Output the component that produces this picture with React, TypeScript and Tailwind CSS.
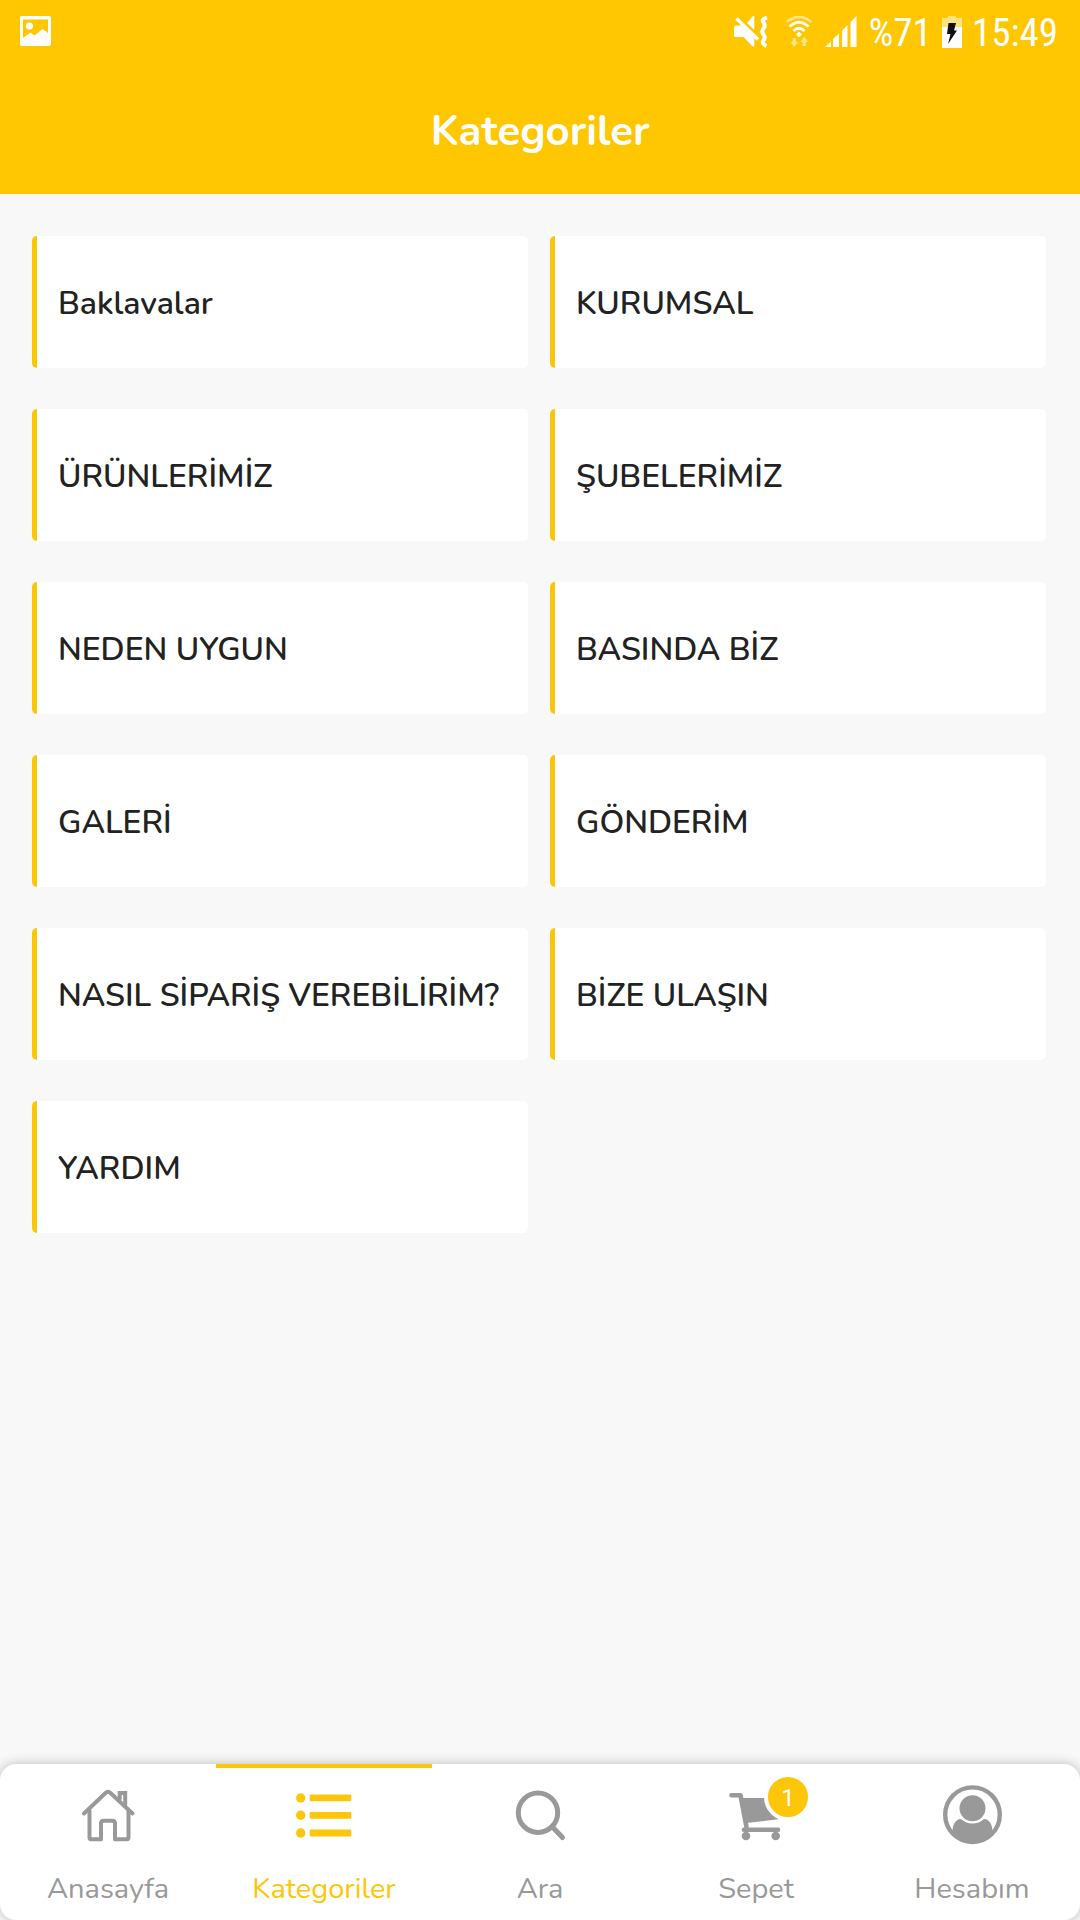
import React from 'react';

type Tab = {
  label: string;
  icon: any;
  active?: boolean;
  badge?: number;
};

const categories = [
  'Baklavalar',
  'KURUMSAL',
  'ÜRÜNLERİMİZ',
  'ŞUBELERİMİZ',
  'NEDEN UYGUN',
  'BASINDA BİZ',
  'GALERİ',
  'GÖNDERİM',
  'NASIL SİPARİŞ VEREBİLİRİM?',
  'BİZE ULAŞIN',
  'YARDIM',
];

// tab icons share one 60x60 canvas
const tabIcon = (body: any) => (
  <svg
    className="size-[60px]"
    viewBox="0 0 60 60"
    fill="none"
    stroke="currentColor"
    strokeLinecap="round"
    strokeLinejoin="round"
    aria-hidden="true"
  >
    {body}
  </svg>
);

const tabs: Tab[] = [
  {
    label: 'Anasayfa',
    icon: tabIcon(
      <g strokeWidth="4">
        <path d="M6 28.5 27.5 8Q30 5.5 32.5 8L54.5 28.5" />
        <path d="M11.5 26V52.5Q11.5 54.2 13.2 54.2H23V38.5Q23 35.8 25.7 35.8H34.3Q37 35.8 37 38.5V54.2H48.8Q50.5 54.2 50.5 52.5V26" />
        <path d="M41.7 14V8H47.2V20" strokeLinejoin="miter" />
      </g>,
    ),
  },
  {
    label: 'Kategoriler',
    active: true,
    icon: tabIcon(
      <g fill="currentColor" stroke="none">
        <circle cx="6.7" cy="13" r="4.7" />
        <circle cx="6.7" cy="30.3" r="4.7" />
        <circle cx="6.7" cy="48" r="4.7" />
        <rect x="15.7" y="9.4" width="41.6" height="6.8" rx="1" />
        <rect x="15.7" y="26.9" width="41.6" height="6.8" rx="1" />
        <rect x="15.7" y="44.6" width="41.6" height="6.8" rx="1" />
      </g>,
    ),
  },
  {
    label: 'Ara',
    icon: tabIcon(
      <g strokeWidth="5">
        <circle cx="28" cy="27.7" r="19.7" />
        <path d="M42.5 42 52.5 52.5" />
      </g>,
    ),
  },
  {
    label: 'Sepet',
    badge: 1,
    icon: tabIcon(
      <>
        <path d="M5.5 10.3H14.5L20.5 42" strokeWidth="4.6" />
        <path d="M15.5 13H62L58 33.5 20.5 38Z" fill="currentColor" stroke="none" />
        <path d="M18 44.7H52" strokeWidth="4.6" />
        <circle cx="20" cy="51" r="4.3" fill="currentColor" stroke="none" />
        <circle cx="49.7" cy="51" r="4.3" fill="currentColor" stroke="none" />
      </>,
    ),
  },
  {
    label: 'Hesabım',
    icon: tabIcon(
      <>
        <circle cx="30.5" cy="29.7" r="27.3" strokeWidth="4.4" />
        <circle cx="30.5" cy="23.3" r="13" fill="currentColor" stroke="none" />
        <path
          d="M8.5 45.5H10.5C11 39 13.5 34.500 19 34Q24 38.5 30.5 38.5T42 34C47.5 34.5 50 39 50.5 45.5H52.5A27 27 0 0 1 8.5 45.5Z"
          fill="currentColor"
          stroke="none"
        />
      </>,
    ),
  },
];

const StatusBar = () => (
  <div className="flex h-16 items-center pr-[22px] pl-5 text-white">
    <svg className="h-8 w-8" viewBox="0 0 32 32" fill="currentColor" aria-hidden="true">
      <path
        fillRule="evenodd"
        d="M2 0H29Q31 0 31 2V28Q31 30 29 30H2Q0 30 0 28V2Q0 0 2 0ZM3 3.5V22L10.5 16.5 14.5 19.5 22.5 13 28 17V3.5Z"
      />
      <circle cx="9.5" cy="10" r="3.6" />
    </svg>

    <div className="ml-auto flex items-center gap-3">
      <svg className="mr-1 h-8 w-9" viewBox="0 0 36 32" fill="currentColor" aria-hidden="true">
        <path d="M1 11Q1 9.5 2.5 9.5H8L21.3 21V30.5H19.5L10.5 21H2.5Q1 21 1 19.5Z" />
        <path d="M14 7 20 0H21.3V14Z" />
        <path d="M3.5 2.5 25 23.5" stroke="currentColor" strokeWidth="3.4" />
        <path
          d="M34 1.5Q28 3.5 30.5 6.5T30.5 12.5 30.5 18.5 30.5 24.5 33.5 30"
          fill="none"
          stroke="currentColor"
          strokeWidth="4"
        />
      </svg>
      <svg
        className="h-8 w-7"
        viewBox="0 0 28 32"
        fill="none"
        stroke="currentColor"
        strokeWidth="2.8"
        aria-hidden="true"
      >
        <path d="M1.5 6Q14-4 26.5 6" opacity="0.5" />
        <path d="M4.5 10.5Q14 2 23.5 10.5M8.5 15Q14 9.5 19.5 15" />
        <path d="M14 15.5 17 18.5 14 21.5 11 18.5Z" fill="currentColor" stroke="none" />
        <path
          d="M7.5 22H11V26H13L9.3 31 5.500 26H7.5ZM17.5 30H21V26H23L19.3 20.5 15.5 26H17.5Z"
          fill="currentColor"
          stroke="none"
          opacity="0.5"
        />
      </svg>
      <svg className="h-8 w-8" viewBox="0 0 32 32" fill="currentColor" aria-hidden="true">
        <path d="M0 31 6 25.5V31ZM8 31V23L14 17.5V31ZM17 31V14.5L22.5 9V31ZM25.5 31V6L31.5 0V31Z" />
      </svg>
      <div className="flex items-center gap-[10px] font-['Roboto_Condensed','Roboto',sans-serif] text-[39px] leading-10">
        <span className="pt-[2px]">%71</span>
        <svg className="h-8 w-5" viewBox="0 0 20 32" aria-hidden="true">
          <path d="M6 0H14V2H20V11H0V2H6Z" fill="#fff" opacity="0.5" />
          <path d="M0 11H20V32H0Z" fill="#fff" />
          <path d="M6.5 7H14L12 14.5H15L6 28 8.5 18H5Z" fill="#111" />
        </svg>
        <span className="pt-[2px]">15:49</span>
      </div>
    </div>
  </div>
);

const TabItem = ({ label, icon, active, badge }: Tab) => (
  <a
    href="#"
    aria-current={active ? 'page' : undefined}
    className={
      active
        ? 'flex flex-1 flex-col items-center border-t-4 border-[#fdc608] pt-[17px] text-[#fdc608]'
        : 'flex flex-1 flex-col items-center border-t-4 border-transparent pt-[17px] text-[#999999]'
    }
  >
    <span className="relative">
      {icon}
      {badge && (
        <span className="absolute -top-3 -right-[26px] flex size-12 items-center justify-center rounded-full border-4 border-white bg-[#fdc608] pt-[2px] font-[Roboto] text-2xl text-white">
          {badge}
        </span>
      )}
    </span>
    <span className="mt-6 text-[29px] leading-10">{label}</span>
  </a>
);

const App = () => {
  return (
    <div className="flex min-h-screen flex-col bg-[#f8f8f8] font-['Nunito','Noto_Sans',sans-serif]">
      <header className="bg-[#ffc602] text-white">
        <StatusBar />
        <h1 className="flex h-[130px] items-center justify-center pt-1 text-[42px] font-bold">
          Kategoriler
        </h1>
      </header>

      <main className="grid grid-cols-2 gap-x-[22px] gap-y-[41px] py-[42px] pr-[34px] pl-8">
        {categories.map((name) => (
          <a
            key={name}
            href="#"
            className="flex h-[132px] items-center rounded-[5px] border-l-[5px] border-[#fac60c] bg-white pt-1 pl-[21px] text-[32px] font-semibold whitespace-nowrap text-[#222222]"
          >
            {name}
          </a>
        ))}
      </main>

      <div className="mt-auto">
        <nav className="flex h-[156px] rounded-2xl bg-white shadow-[0_0_12px_rgba(0,0,0,0.25)]">
          {tabs.map((tab) => (
            <TabItem key={tab.label} {...tab} />
          ))}
        </nav>
      </div>
    </div>
  );
};

export default App;
